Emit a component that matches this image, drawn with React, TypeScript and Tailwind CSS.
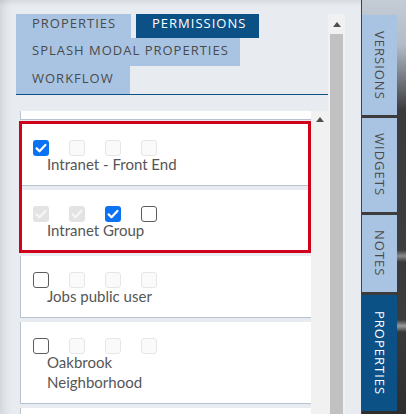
import React from 'react';

type Box = 'on' | 'off' | 'dis' | 'disOn';

const items: { name: string; boxes: Box[] }[] = [
    { name: 'Intranet - Front End', boxes: ['on', 'dis', 'dis', 'dis'] },
    { name: 'Intranet Group', boxes: ['disOn', 'disOn', 'on', 'off'] },
    { name: 'Jobs public user', boxes: ['off', 'dis', 'dis', 'dis'] },
    { name: 'Oakbrook Neighborhood', boxes: ['off', 'dis', 'dis', 'dis'] },
];

const sideTabs = [
    { name: 'VERSIONS', h: 'h-[100px]', active: false },
    { name: 'WIDGETS', h: 'h-[94px]', active: false },
    { name: 'NOTES', h: 'h-[77px]', active: false },
    { name: 'PROPERTIES', h: 'h-[116px]', active: true },
];

function Check({ color }: { color: string }) {
    return (
        <svg viewBox="0 0 16 16" className="w-4 h-4">
            <path d="M3.6 8.4l2.9 2.9 5.9-6.4" fill="none" stroke={color} strokeWidth="2.2" strokeLinecap="round" strokeLinejoin="round" />
        </svg>
    );
}

function CheckBox({ kind }: { kind: Box }) {
    if (kind === 'on') {
        return <div className="w-4 h-4 rounded-[3px] bg-[#0b72f2]"><Check color="#ffffff" /></div>;
    }
    if (kind === 'disOn') {
        return <div className="w-4 h-4 rounded-[3px] bg-[#e3e3e3]"><Check color="#f6f6f6" /></div>;
    }
    if (kind === 'dis') {
        return <div className="w-4 h-4 rounded-[3px] border border-[#e6e6e6] bg-[#fafafa]" />;
    }
    return <div className="w-4 h-4 rounded-[3px] border border-[#5c5c5c] bg-white" />;
}

function Arrow() {
    return (
        <svg viewBox="0 0 8 5" className="w-[8px] h-[5px]">
            <path d="M0 5L4 0l4 5z" fill="#505050" />
        </svg>
    );
}

export default function App() {
    return (
        <div className="flex w-[406px] h-[414px] overflow-hidden font-['Open_Sans',sans-serif]">
            <div className="flex shrink-0 w-[362px] h-full bg-[#e8ecf0] border-r border-[#0b5186] pl-4 pr-4 pt-[14px] shadow-[inset_12px_0_10px_-8px_rgba(0,0,0,0.10),inset_0_6px_6px_-5px_rgba(0,0,0,0.12)]">
                <div className="flex flex-col w-[312px]">
                    <div className="flex gap-[5px] text-[13px] tracking-[1px] text-[#4a4a4a]">
                        <div className="w-[115px] h-[24px] pb-[5px] pl-4 flex items-center bg-[#a9c4e3]">PROPERTIES</div>
                        <div className="w-[123px] h-[24px] pb-[5px] pl-4 flex items-center bg-[#0b5186] text-white">PERMISSIONS</div>
                    </div>
                    <div className="w-[224px] h-[28px] pb-[2px] pl-4 flex items-center bg-[#a9c4e3] text-[13px] tracking-[1px] text-[#4a4a4a] whitespace-nowrap">SPLASH MODAL PROPERTIES</div>
                    <div className="w-[114px] h-[28px] pb-[2px] pl-4 flex items-center bg-[#a9c4e3] text-[13px] tracking-[1px] text-[#4a4a4a]">WORKFLOW</div>
                    <div className="h-px bg-[#0b5186]" />

                    <div className="flex flex-1 min-h-0 mt-[16px] pl-[4px]">
                        <div className="relative flex-1 flex flex-col gap-[4px] font-['Lato',sans-serif] text-[15px] text-[#565656]">
                            <div className="h-[9px] shrink-0 bg-white border-l border-b border-[#b7c3d1]" />
                            {items.map((item) => (
                                <div key={item.name} className="shrink-0 bg-white border-l border-b border-[#b7c3d1] pl-[12px] pt-4 pb-[11px]">
                                    <div className="flex gap-5">
                                        {item.boxes.map((b, i) => (
                                            <CheckBox key={i} kind={b} />
                                        ))}
                                    </div>
                                    <div className="ml-[14px] -mt-[2px] w-[150px] leading-[20px]">{item.name}</div>
                                </div>
                            ))}
                            <div className="h-[20px] shrink-0 bg-white border-l border-[#b7c3d1]" />
                            <div className="absolute left-[-1px] top-[10px] w-[292px] h-[132px] border-[3px] border-[#d0021b]" />
                        </div>
                        <div className="w-[17px] bg-[#f1f1f1] flex justify-center pt-[6px]">
                            <Arrow />
                        </div>
                    </div>
                </div>

                <div className="flex flex-col w-[17px] bg-[#f1f1f1]">
                    <div className="h-[20px] flex items-center justify-center">
                        <Arrow />
                    </div>
                    <div className="flex-1 mx-[2px] bg-[#c1c1c1]" />
                </div>
            </div>

            <div className="flex-1 flex flex-col gap-[3px] pt-[15px] bg-[linear-gradient(to_bottom,#c4ccd5_0px,#b3bcc6_45px,#7b8088_75px,#3b3b3b_110px,#3d3d3d_250px,#8a8a8a_256px,#3a3a3a_262px,#3c3c3c_320px,#9a9a9a_326px,#383838_332px,#2e2e2e_414px)]">
                {sideTabs.map((t) => (
                    <div
                        key={t.name}
                        className={`w-[35px] ${t.h} shrink-0 flex items-center justify-center text-[13px] tracking-[1px] ${t.active ? 'bg-[#0b5186] text-white' : 'bg-[#a9c4e3] text-[#4a4a4a]'}`}
                    >
                        <span className="[writing-mode:vertical-rl]">{t.name}</span>
                    </div>
                ))}
            </div>
        </div>
    );
}
